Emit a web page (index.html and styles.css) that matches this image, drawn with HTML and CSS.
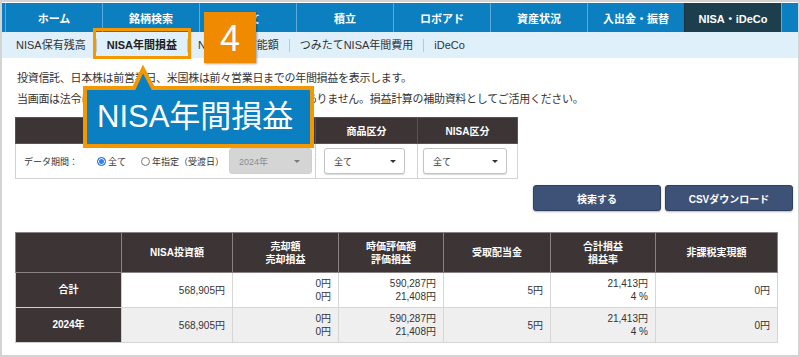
FILE: index.html
```html
<!DOCTYPE html>
<html lang="ja">
<head>
<meta charset="utf-8">
<title>NISA年間損益</title>
<link rel="stylesheet" href="styles.css">
</head>
<body>
<div class="frame">
  <nav class="gnav">
    <a class="gnav-item">ホーム</a>
    <a class="gnav-item">銘柄検索</a>
    <a class="gnav-item">注文</a>
    <a class="gnav-item">積立</a>
    <a class="gnav-item">ロボアド</a>
    <a class="gnav-item">資産状況</a>
    <a class="gnav-item">入出金・振替</a>
    <a class="gnav-item is-active">NISA・iDeCo</a>
    <span class="gnav-rest"></span>
  </nav>
  <div class="subnav">
    <a class="subnav-item">NISA保有残高</a>
    <a class="subnav-item is-current">NISA年間損益</a>
    <a class="subnav-item">NISA投資可能額</a>
    <a class="subnav-item">つみたてNISA年間費用</a>
    <a class="subnav-item">iDeCo</a>
  </div>

  <main class="content">
    <p class="desc">投資信託、日本株は前営業日、米国株は前々営業日までの年間損益を表示します。<br>当画面は法令に基づく報告書ではなく、確定申告の書類ではありません。損益計算の補助資料としてご活用ください。</p>

    <table class="filter">
      <colgroup>
        <col class="fc-period">
        <col class="fc-product">
        <col class="fc-nisa">
      </colgroup>
      <thead>
        <tr>
          <th>対象期間</th>
          <th>商品区分</th>
          <th>NISA区分</th>
        </tr>
      </thead>
      <tbody>
        <tr>
          <td class="filter-cell">
            <div class="period">
              <span class="period-label">データ期間：</span>
              <span class="radio-opt radio-opt--first"><span class="radio is-checked"></span>全て</span>
              <span class="radio-opt radio-opt--second"><span class="radio"></span>年指定（受渡日）</span>
              <div class="select select--year is-disabled"><span>2024年</span><i class="caret"></i></div>
            </div>
          </td>
          <td class="filter-cell filter-cell--product">
            <div class="select select--product"><span>全て</span><i class="caret"></i></div>
          </td>
          <td class="filter-cell filter-cell--nisa">
            <div class="select select--nisa"><span>全て</span><i class="caret"></i></div>
          </td>
        </tr>
      </tbody>
    </table>

    <div class="actions">
      <button class="btn">検索する</button>
      <button class="btn">CSVダウンロード</button>
    </div>

    <table class="result">
      <colgroup>
        <col class="rc-1"><col class="rc-2"><col class="rc-3"><col class="rc-4"><col class="rc-5"><col class="rc-6"><col class="rc-7">
      </colgroup>
      <thead>
        <tr>
          <th></th>
          <th>NISA投資額</th>
          <th>売却額<br>売却損益</th>
          <th>時価評価額<br>評価損益</th>
          <th>受取配当金</th>
          <th>合計損益<br>損益率</th>
          <th>非課税実現額</th>
        </tr>
      </thead>
      <tbody>
        <tr>
          <th class="row-head">合計</th>
          <td>568,905円</td>
          <td>0円<br>0円</td>
          <td>590,287円<br>21,408円</td>
          <td>5円</td>
          <td>21,413円<br>4 %</td>
          <td>0円</td>
        </tr>
        <tr class="is-alt">
          <th class="row-head">2024年</th>
          <td>568,905円</td>
          <td>0円<br>0円</td>
          <td>590,287円<br>21,408円</td>
          <td>5円</td>
          <td>21,413円<br>4 %</td>
          <td>0円</td>
        </tr>
      </tbody>
    </table>
  </main>

  <div class="hl"></div>
  <div class="badge">4</div>
  <svg class="callout-shape" width="236" height="86" viewBox="0 0 236 86">
    <path d="M4,24 H53 L62,5 L72,24 H231 V82 H4 Z" fill="#0a7fc2" stroke="#f39800" stroke-width="4" stroke-linejoin="miter"/>
  </svg>
  <div class="callout-text">NISA年間損益</div>
</div>
</body>
</html>
```

FILE: styles.css
```css
* {
  box-sizing: border-box;
}

body {
  margin: 0;
  background: #fff;
  color: #333;
  font-family: "Liberation Sans", "Noto Sans CJK JP", sans-serif;
}

.frame {
  position: relative;
  width: 800px;
  height: 357px;
  border: 2px solid #d3d3d3;
  padding-top: 1px;
  overflow: hidden;
}

/* global nav */
.gnav {
  display: flex;
  height: 29px;
  background: #0b7fc0;
  padding-left: 3px;
}

.gnav-item {
  width: 97px;
  flex: none;
  display: flex;
  align-items: center;
  justify-content: center;
  border-left: 1px solid #58a9dc;
  color: #fff;
  font-size: 11px;
  font-weight: bold;
}

.gnav-item.is-active {
  background: #1c3e4d;
  border-left-color: #15303c;
}

.gnav-rest {
  flex: 1;
  border-left: 1px solid #58a9dc;
}

/* sub nav */
.subnav {
  display: flex;
  align-items: center;
  height: 26px;
  background: #dff0fb;
  padding-left: 4px;
  font-size: 11px;
}

.subnav-item {
  padding: 0 10px;
  line-height: 13px;
  color: #333;
}

.subnav-item + .subnav-item {
  border-left: 1px solid #bcc8d0;
}

.subnav-item.is-current {
  font-weight: bold;
  color: #222;
}

/* content */
.content {
  padding: 0 3px 0 13px;
}

.desc {
  margin: 10px 0 7px;
  padding-left: 2px;
  font-size: 11px;
  letter-spacing: -0.3px;
  line-height: 21px;
  color: #333;
}

/* filter table */
.filter {
  border-collapse: collapse;
  table-layout: fixed;
  width: 502px;
}

.fc-period { width: 300px; }
.fc-product { width: 102px; }
.fc-nisa { width: 100px; }

.filter th {
  height: 26px;
  background: #3d3535;
  color: #fff;
  font-size: 10px;
  font-weight: bold;
  text-align: center;
  border: 1px solid #5b5353;
  padding: 0;
}

.filter td {
  height: 35px;
  border: 1px solid #d2d2d2;
  padding: 0;
  vertical-align: middle;
}

.filter-cell {
  padding-left: 8px !important;
}

.filter-cell--nisa {
  padding-left: 5px !important;
}

.period {
  display: flex;
  align-items: center;
  font-size: 9px;
  color: #333;
}

.radio-opt {
  display: flex;
  align-items: center;
}

.radio-opt--first {
  margin-left: 19px;
}

.radio-opt--second {
  margin-left: 15px;
}

.radio {
  width: 9px;
  height: 9px;
  border-radius: 50%;
  border: 1px solid #767676;
  background: #fff;
  margin-right: 2px;
}

.radio.is-checked {
  border-color: #1a6fe0;
  background: #2f80ed;
  box-shadow: inset 0 0 0 1px #fff;
}

.select {
  display: flex;
  align-items: center;
  justify-content: space-between;
  height: 26px;
  padding: 0 8px 0 9px;
  border: 1px solid #c4c4c4;
  border-radius: 3px;
  background: #fff;
  box-shadow: 0 1px 1px rgba(0, 0, 0, 0.15);
  font-size: 9px;
  color: #333;
}

.select--year {
  width: 83px;
  margin-left: 5px;
  padding-right: 11px;
}

.select--product {
  width: 81px;
}

.select--nisa {
  width: 84px;
}

.select.is-disabled {
  background: #d5d5d5;
  border-color: #cfcfcf;
  color: #8a8a8a;
  box-shadow: none;
}

.caret {
  width: 0;
  height: 0;
  border-left: 3px solid transparent;
  border-right: 3px solid transparent;
  border-top: 3px solid #333;
}

.is-disabled .caret {
  border-top-color: #7a7a7a;
}

/* actions */
.actions {
  display: flex;
  justify-content: flex-end;
  gap: 4px;
  margin-top: 6px;
  padding-right: 2px;
}

.btn {
  width: 128px;
  height: 26px;
  border: 1px solid #2f3f5e;
  border-radius: 3px;
  background: #3e5176;
  box-shadow: 0 1px 2px rgba(0, 0, 0, 0.3);
  color: #fff;
  font-family: inherit;
  font-size: 10px;
  font-weight: bold;
  padding: 0;
}

/* result table */
.result {
  margin-top: 21px;
  width: 762px;
  border-collapse: collapse;
  table-layout: fixed;
}

.rc-1 { width: 106px; }
.rc-2 { width: 111px; }
.rc-3 { width: 106px; }
.rc-4 { width: 105px; }
.rc-5 { width: 107px; }
.rc-6 { width: 105px; }
.rc-7 { width: 122px; }

.result thead th {
  height: 40px;
  background: #3d3535;
  color: #fff;
  font-size: 10px;
  font-weight: bold;
  line-height: 13px;
  text-align: center;
  border: 1px solid #8a8282;
  padding: 0;
}

.result td {
  height: 35px;
  padding: 0 7px;
  text-align: right;
  font-size: 10px;
  line-height: 13px;
  color: #333;
  border: 1px solid #d6d6d6;
  background: #fff;
}

.result .is-alt td {
  background: #efefef;
}

.result .row-head {
  background: #3d3535;
  color: #fff;
  font-size: 10px;
  font-weight: bold;
  text-align: center;
  border: 1px solid #cfcfcf;
  padding: 0 0 4px;
}

/* overlays */
.hl {
  position: absolute;
  left: 91px;
  top: 26px;
  width: 98px;
  height: 31px;
  border: 3px solid #f39800;
}

.badge {
  position: absolute;
  left: 202px;
  top: 10px;
  width: 52px;
  height: 51px;
  background: #f08a00;
  box-shadow: 1px 1px 2px rgba(0, 0, 0, 0.35);
  color: #fff;
  font-size: 36px;
  display: flex;
  align-items: center;
  justify-content: center;
  padding-top: 3px;
}

.callout-shape {
  position: absolute;
  left: 79px;
  top: 62px;
}

.callout-text {
  position: absolute;
  left: 95px;
  top: 99px;
  color: #fff;
  font-size: 31px;
  line-height: 31px;
  white-space: nowrap;
}
```
